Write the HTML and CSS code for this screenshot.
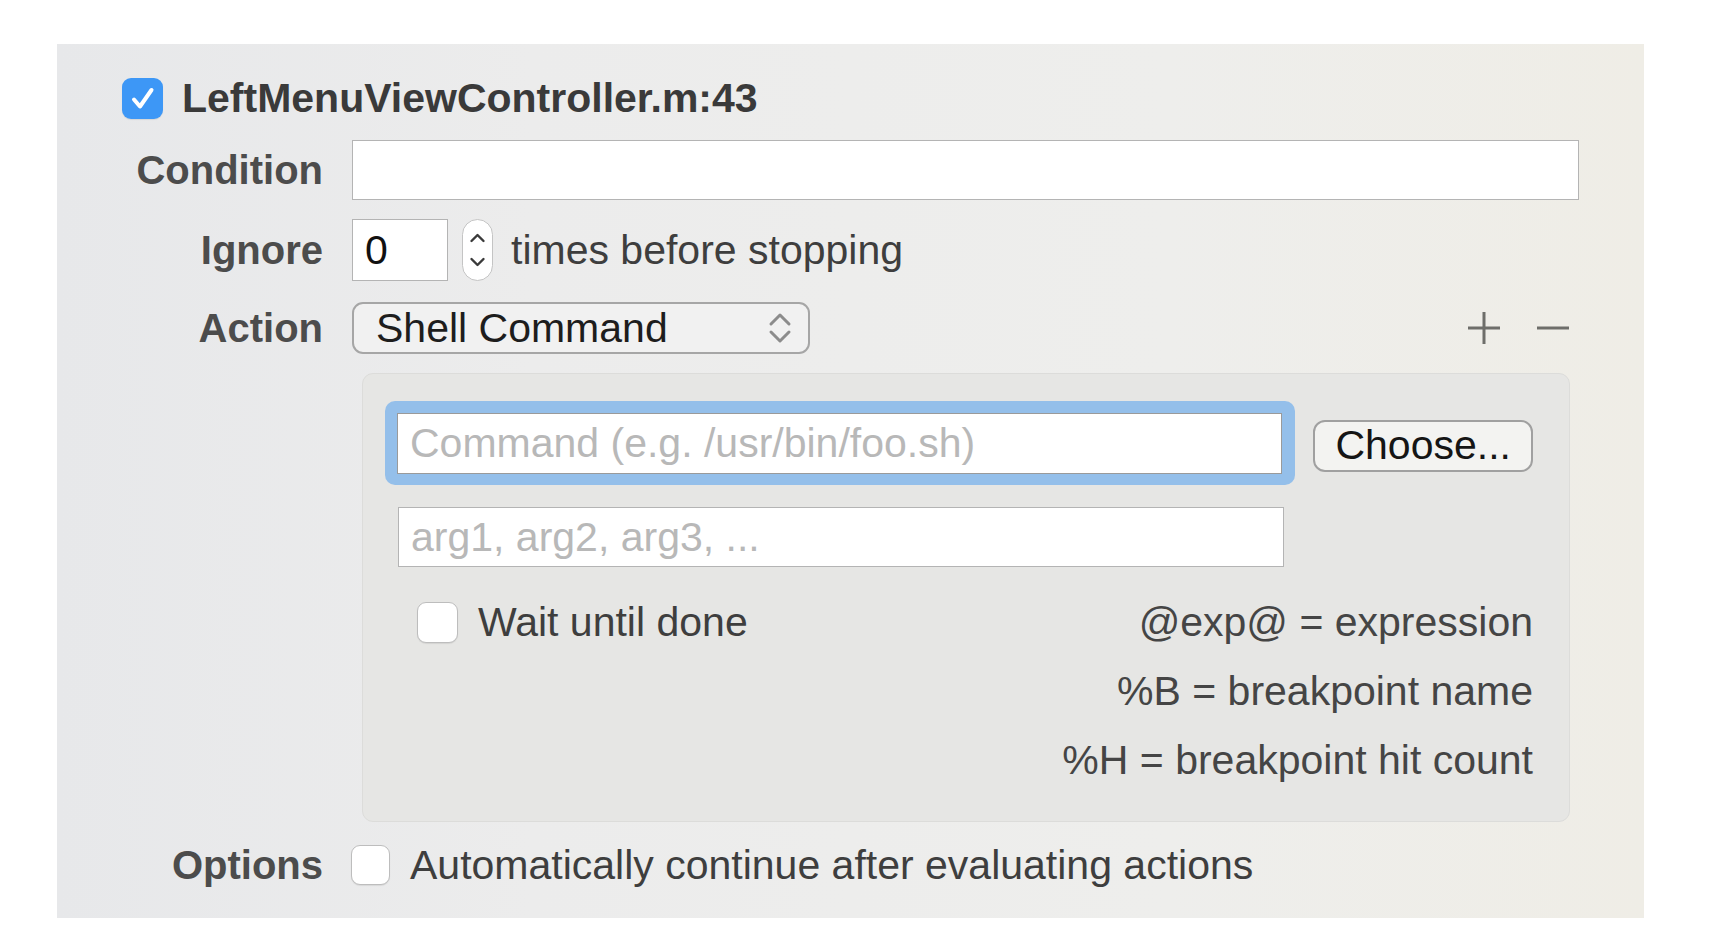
FILE: index.html
```html
<!DOCTYPE html>
<html>
<head>
<meta charset="utf-8">
<link rel="stylesheet" href="styles.css">
</head>
<body>
<div class="panel">
  <div class="title-row">
    <span class="check checked">
      <svg width="41" height="41" viewBox="0 0 41 41"><path d="M12 21.5 L18 28.5 L29.5 12" fill="none" stroke="#fff" stroke-width="4" stroke-linecap="round" stroke-linejoin="round"/></svg>
    </span>
    <span class="title">LeftMenuViewController.m:43</span>
  </div>

  <div class="row row-condition">
    <div class="label">Condition</div>
    <div class="field field-condition"></div>
  </div>

  <div class="row row-ignore">
    <div class="label">Ignore</div>
    <div class="field field-ignore">0</div>
    <div class="stepper">
      <svg width="31" height="62" viewBox="0 0 31 62"><path d="M9.5 22 L15.5 16 L21.5 22" fill="none" stroke="#3a3a3a" stroke-width="2.4" stroke-linecap="round" stroke-linejoin="round"/><path d="M9.5 40 L15.5 46 L21.5 40" fill="none" stroke="#3a3a3a" stroke-width="2.4" stroke-linecap="round" stroke-linejoin="round"/></svg>
    </div>
    <div class="text">times before stopping</div>
  </div>

  <div class="row row-action">
    <div class="label">Action</div>
    <div class="popup">
      <span class="popup-text">Shell Command</span>
      <svg class="popup-arrows" width="24" height="36" viewBox="0 0 24 36"><path d="M3 14 L12 5 L21 14" fill="none" stroke="#8c8c8c" stroke-width="3" stroke-linecap="round" stroke-linejoin="round"/><path d="M3 22 L12 31 L21 22" fill="none" stroke="#8c8c8c" stroke-width="3" stroke-linecap="round" stroke-linejoin="round"/></svg>
    </div>
    <div class="pm">
      <svg width="32" height="32" viewBox="0 0 32 32"><path d="M0 16 H32 M16 0 V32" stroke="#6e6e6a" stroke-width="3"/></svg>
      <svg width="32" height="32" viewBox="0 0 32 32"><path d="M0 16 H32" stroke="#6e6e6a" stroke-width="3"/></svg>
    </div>
  </div>

  <div class="action-box">
    <div class="cmd-row">
      <div class="focus-ring">
        <div class="field field-cmd"><span class="placeholder">Command (e.g. /usr/bin/foo.sh)</span></div>
      </div>
      <div class="button">Choose...</div>
    </div>
    <div class="field field-args"><span class="placeholder">arg1, arg2, arg3, ...</span></div>
    <div class="bottom">
      <div class="wait">
        <span class="check"></span>
        <span class="text">Wait until done</span>
      </div>
      <div class="legend">
        <div>@exp@ = expression</div>
        <div>%B = breakpoint name</div>
        <div>%H = breakpoint hit count</div>
      </div>
    </div>
  </div>

  <div class="row row-options">
    <div class="label">Options</div>
    <span class="check small"></span>
    <span class="text">Automatically continue after evaluating actions</span>
  </div>
</div>
</body>
</html>
```

FILE: styles.css
```css
* { box-sizing: border-box; }

html, body {
  margin: 0;
  padding: 0;
  background: #ffffff;
}

body {
  font-family: "Liberation Sans", Arial, sans-serif;
  font-size: 41px;
  color: #3e3e3e;
}

.panel {
  margin: 44px 0 0 57px;
  width: 1587px;
  height: 874px;
  padding-top: 34px;
  background: linear-gradient(to right, #e7e8ea 0%, #ececec 30%, #eeeeec 70%, #efede6 100%);
  display: flex;
  flex-direction: column;
}

.title-row {
  display: flex;
  align-items: center;
  gap: 19px;
  padding-left: 65px;
  height: 41px;
}

.title {
  font-weight: bold;
  color: #3a3a3a;
  font-size: 41px;
}

.check {
  display: inline-flex;
  width: 41px;
  height: 41px;
  border-radius: 9px;
  background: #fff;
  border: 1.5px solid #bdbdbd;
  box-shadow: 0 1px 1px rgba(0,0,0,0.08);
  flex: none;
}

.check.checked {
  background: #3d97f6;
  border: none;
}

.check.small {
  width: 39px;
  height: 40px;
}

.row {
  display: flex;
  align-items: center;
}

.label {
  width: 266px;
  margin-right: 29px;
  text-align: right;
  font-weight: bold;
  color: #4c4c4c;
  font-size: 40px;
  flex: none;
}

.field {
  background: #fff;
  border: 1.5px solid #b4b4b4;
  display: flex;
  align-items: center;
}

.row-condition {
  margin-top: 21px;
  height: 60px;
}

.field-condition {
  width: 1227px;
  height: 60px;
}

.row-ignore {
  margin-top: 19px;
  height: 62px;
}

.field-ignore {
  width: 96px;
  height: 62px;
  padding-left: 12px;
  color: #111;
}

.stepper {
  margin-left: 14px;
  width: 31px;
  height: 62px;
  border-radius: 16px;
  border: 1.5px solid #c4c4c4;
  background: #fff;
  display: flex;
  align-items: center;
  justify-content: center;
}

.stepper svg {
  display: block;
  flex: none;
}

.row-ignore .text {
  margin-left: 18px;
}

.row-action {
  margin-top: 21px;
  height: 52px;
}

.popup {
  width: 458px;
  height: 52px;
  border: 2px solid #a6a6a6;
  border-radius: 11px;
  background: #f1f1f1;
  display: flex;
  align-items: center;
  justify-content: space-between;
  padding: 0 16px 0 22px;
  color: #1d1d1d;
}

.popup-arrows {
  display: block;
}

.pm {
  margin-left: auto;
  margin-right: 75px;
  display: flex;
  gap: 37px;
  align-items: center;
}

.pm svg {
  display: block;
}

.action-box {
  margin: 19px 0 0 305px;
  width: 1208px;
  height: 449px;
  background: #e6e6e4;
  border: 1px solid #dcdcda;
  border-radius: 11px;
  padding: 27px 36px 0 22px;
}

.cmd-row {
  display: flex;
  align-items: center;
}

.focus-ring {
  width: 912px;
  height: 84px;
  background: #94bfea;
  border-radius: 10px;
  padding: 12px 13px 11px 12px;
}

.field-cmd {
  width: 100%;
  height: 100%;
  border-color: #9a9a9a;
  padding-left: 12px;
}

.placeholder {
  color: #b8b8b8;
  font-size: 41px;
}

.button {
  margin-left: 18px;
  margin-top: 5px;
  width: 220px;
  height: 52px;
  border: 2.5px solid #a0a0a0;
  border-radius: 12px;
  background: #f3f3f1;
  color: #151515;
  display: flex;
  align-items: center;
  justify-content: center;
}

.field-args {
  margin: 22px 0 0 13px;
  width: 886px;
  height: 60px;
  padding-left: 12px;
}

.bottom {
  display: flex;
  justify-content: space-between;
  margin-top: 21px;
}

.wait {
  display: flex;
  align-items: center;
  height: 69px;
  margin-left: 32px;
  gap: 20px;
}

.legend {
  text-align: right;
  line-height: 69px;
  color: #454545;
}

.row-options {
  margin-top: 23px;
  height: 40px;
}

.row-options .label {
  margin-right: 28px;
}

.row-options .text {
  margin-left: 20px;
}
```
